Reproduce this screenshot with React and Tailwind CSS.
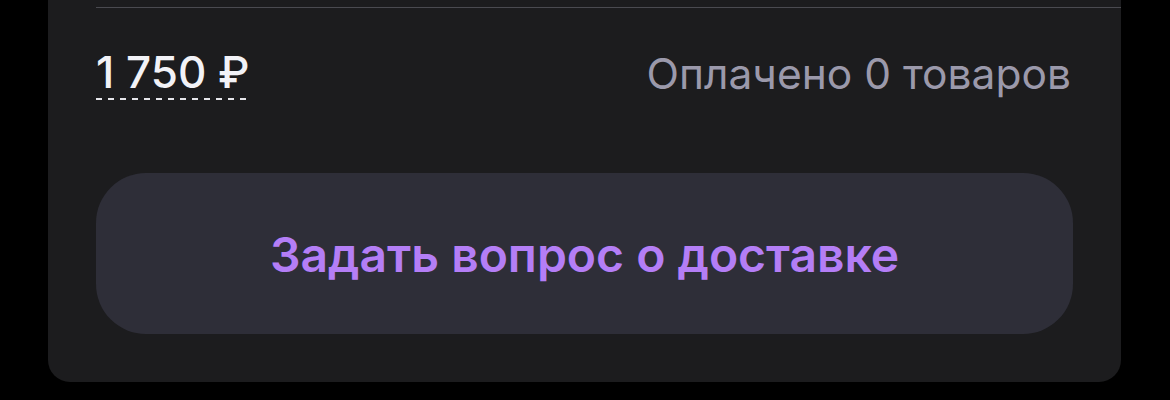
export default function App() {
  return (
    <div className="w-[1170px] h-[400px] bg-black overflow-hidden" style={{ fontFamily: 'Inter, "Noto Sans", sans-serif' }}>
      <div className="ml-[48px] w-[1073px] h-[382px] bg-[#1c1c1e] rounded-b-[22px] flex flex-col">
        <div className="mt-[7px] ml-[48px] h-px bg-[#4a4a50]" />
        <div className="flex items-start justify-between pl-[48px] pr-[50px] mt-[39px]">
          <div className="flex flex-col">
            <span className="text-[44px] leading-[50px] font-medium text-[#f2f2f7]">1 750 ₽</span>
            <div className="mt-[1px] h-[2px] w-[150px] bg-[repeating-linear-gradient(90deg,#e5e5ea_0px,#e5e5ea_6px,transparent_6px,transparent_12px)]" />
          </div>
          <span className="text-[42.5px] leading-[50px] text-[#9b99ab] mt-[2px]">Оплачено 0 товаров</span>
        </div>
        <div className="mx-[48px] mt-[73px] h-[161px] rounded-[50px] bg-[#2e2e38] flex items-center justify-center">
          <span className="text-[48px] font-semibold text-[#b47ef6] pt-[2px]">Задать вопрос о доставке</span>
        </div>
      </div>
    </div>
  );
}
